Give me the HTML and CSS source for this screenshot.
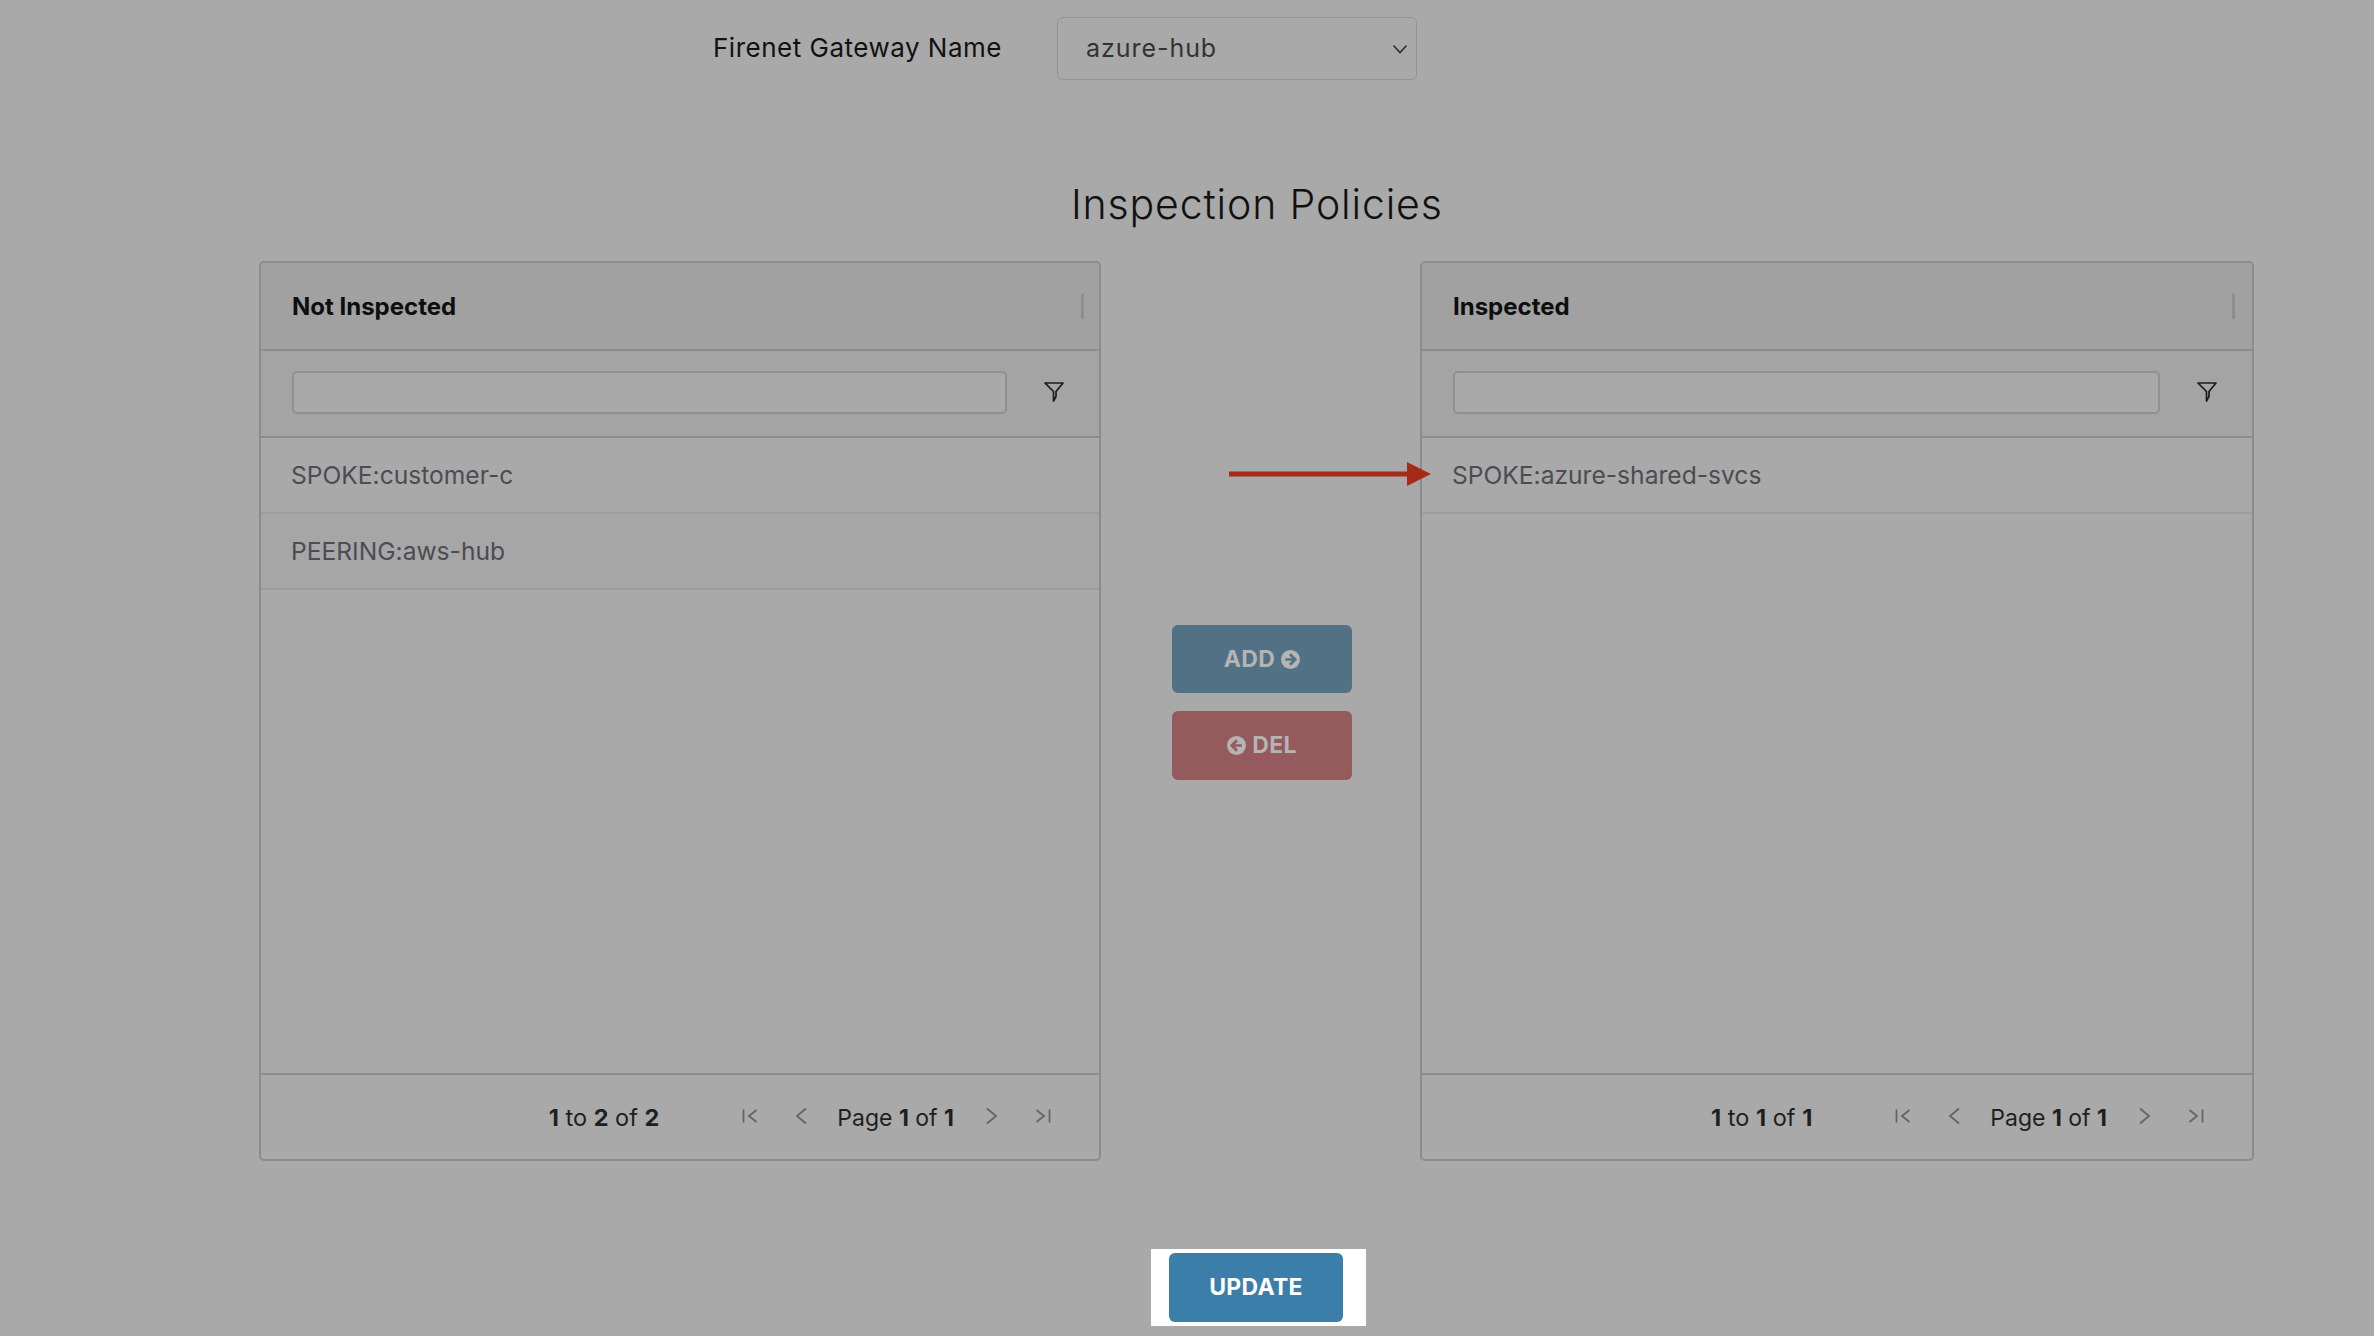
FILE: index.html
```html
<!DOCTYPE html>
<html lang="en">
<head>
<meta charset="utf-8">
<title>Inspection Policies</title>
<link rel="stylesheet" href="styles.css">
</head>
<body>
<main class="page">
  <div class="gateway">
    <label class="gateway-label">Firenet Gateway Name</label>
    <div class="select">
      <span>azure-hub</span>
      <svg class="select-caret" viewBox="0 0 16 10" width="16" height="10"><path d="M1.5 1.5 8 8.5l6.5-7" fill="none" stroke="#2e2e2e" stroke-width="1.6"/></svg>
    </div>
  </div>
  <h1 class="title">Inspection Policies</h1>
  <div class="columns">
    <section class="grid grid-left">
      <header class="grid-head"><span>Not Inspected</span><i class="head-sep"></i></header>
      <div class="grid-filter">
        <div class="filter-input"></div>
        <svg class="funnel" viewBox="0 0 20 20" width="20" height="20"><path d="M1 1h18l-7 8.500v5l-2.500 4.500v-9.500z" fill="none" stroke="#1c1c1c" stroke-width="1.700" stroke-linejoin="round"/></svg>
      </div>
      <div class="grid-body">
        <div class="row">SPOKE:customer-c</div>
        <div class="row row-alt">PEERING:aws-hub</div>
      </div>
      <footer class="grid-foot">
        <span class="count"><b>1</b> to <b>2</b> of <b>2</b></span>
        <div class="pager">
          <svg class="pg" viewBox="0 0 16 16" width="16" height="16"><path d="M1.500 1.500v13M14.500 2 7 8l7.500 6" fill="none" stroke="#656565" stroke-width="1.800"/></svg>
          <svg class="pg pg-prev" viewBox="0 0 14 18" width="14" height="18"><path d="M12 1.500 3 9l9 7.500" fill="none" stroke="#656565" stroke-width="1.800"/></svg>
          <span class="page-text">Page <b>1</b> of <b>1</b></span>
          <svg class="pg pg-next" viewBox="0 0 14 18" width="14" height="18"><path d="M2 1.500 11 9l-9 7.500" fill="none" stroke="#656565" stroke-width="1.800"/></svg>
          <svg class="pg pg-last" viewBox="0 0 16 16" width="16" height="16"><path d="M1.500 2 9 8l-7.500 6M14.500 1.500v13" fill="none" stroke="#656565" stroke-width="1.800"/></svg>
        </div>
      </footer>
    </section>
    <div class="actions">
      <button class="btn btn-add">ADD <svg class="btn-icon" viewBox="0 0 20 20" width="19" height="19"><circle cx="10" cy="10" r="10" fill="#b4b4b4"/><path d="M9.500 4.500 15 10l-5.500 5.500M15 10H4.500" fill="none" stroke="#527185" stroke-width="2.800"/></svg></button>
      <button class="btn btn-del"><svg class="btn-icon" viewBox="0 0 20 20" width="19" height="19"><circle cx="10" cy="10" r="10" fill="#b4b4b4"/><path d="M10.500 4.500 5 10l5.500 5.500M5 10h10.500" fill="none" stroke="#945a5c" stroke-width="2.800"/></svg> DEL</button>
    </div>
    <section class="grid grid-right">
      <header class="grid-head"><span>Inspected</span><i class="head-sep"></i></header>
      <div class="grid-filter">
        <div class="filter-input"></div>
        <svg class="funnel" viewBox="0 0 20 20" width="20" height="20"><path d="M1 1h18l-7 8.500v5l-2.500 4.500v-9.500z" fill="none" stroke="#1c1c1c" stroke-width="1.700" stroke-linejoin="round"/></svg>
      </div>
      <div class="grid-body">
        <div class="row">SPOKE:azure-shared-svcs</div>
      </div>
      <footer class="grid-foot">
        <span class="count"><b>1</b> to <b>1</b> of <b>1</b></span>
        <div class="pager">
          <svg class="pg" viewBox="0 0 16 16" width="16" height="16"><path d="M1.500 1.500v13M14.500 2 7 8l7.500 6" fill="none" stroke="#656565" stroke-width="1.800"/></svg>
          <svg class="pg pg-prev" viewBox="0 0 14 18" width="14" height="18"><path d="M12 1.500 3 9l9 7.500" fill="none" stroke="#656565" stroke-width="1.800"/></svg>
          <span class="page-text">Page <b>1</b> of <b>1</b></span>
          <svg class="pg pg-next" viewBox="0 0 14 18" width="14" height="18"><path d="M2 1.500 11 9l-9 7.500" fill="none" stroke="#656565" stroke-width="1.800"/></svg>
          <svg class="pg pg-last" viewBox="0 0 16 16" width="16" height="16"><path d="M1.500 2 9 8l-7.500 6M14.500 1.500v13" fill="none" stroke="#656565" stroke-width="1.800"/></svg>
        </div>
      </footer>
    </section>
    <svg class="callout" viewBox="0 0 202 24" width="202" height="24"><path d="M0 9.500h178V0l24 12-24 12v-9.500H0z" fill="#a52b18"/></svg>
  </div>
  <div class="update-spot"><button class="btn-update">UPDATE</button></div>
</main>
</body>
</html>
```
FILE: styles.css
```css
* { box-sizing: border-box; }
html, body { margin: 0; height: 100%; }
body { background: #a9a9a9; overflow: hidden; }
.page { height: 1336px; display: flex; flex-direction: column; padding-top: 17px; }

.gateway { display: flex; align-items: center; height: 63px; padding-left: 713px; }
.gateway-label { width: 344px; padding-bottom: 2px; font: 400 26px/1 Inter, sans-serif; color: #111; letter-spacing: 0.5px; }
.select { width: 360px; height: 63px; border: 1px solid #939393; border-radius: 6px; display: flex; align-items: center; justify-content: space-between; padding: 0 8px 0 28px; font: 400 25px/1 Inter, sans-serif; letter-spacing: 0.95px; color: #333; }

.title { margin: 0; height: 181px; padding: 100px 0 0 1071px; font: 300 41px/48px Inter, sans-serif; letter-spacing: 0.85px; color: #111; white-space: nowrap; }

.columns { position: relative; display: flex; align-items: stretch; height: 900px; padding-left: 259px; }
.grid { display: flex; flex-direction: column; border: 2px solid #8a8c90; border-radius: 5px; font-family: Inter, sans-serif; }
.grid-left { width: 842px; }
.grid-right { width: 834px; }
.grid-head { flex: none; height: 88px; padding: 1px 17px 0 31px; display: flex; align-items: center; justify-content: space-between; background: #a1a1a1; border-bottom: 2px solid #8a8c90; font-size: 24px; font-weight: 700; color: #0e0e0e; border-radius: 3px 3px 0 0; }
.head-sep { width: 3px; height: 25px; background: #8e8e8e; }
.grid-left .head-sep { margin-right: -2px; }
.grid-filter { flex: none; height: 87px; display: flex; align-items: center; gap: 37px; padding: 0 35px 3px 31px; background: #a4a4a4; border-bottom: 2px solid #8a8c90; }
.filter-input { flex: 1; height: 43px; border: 2px solid #8e9094; border-radius: 5px; background: #a9a9a9; }
.funnel { flex: none; }
.grid-body { flex: 1; }
.row { height: 76px; display: flex; align-items: center; padding-left: 30px; font-size: 24.6px; color: #4a4d52; border-bottom: 2px solid #9d9ea3; }
.row-alt { background: #a6a6a6; }
.grid-foot { flex: none; height: 86px; padding: 1px 48px 0 0; display: flex; align-items: center; justify-content: flex-end; border-top: 2px solid #8a8c90; font-size: 23.5px; color: #1f1f1f; }
.grid-foot b { font-weight: 700; }
.count { margin-right: 83px; }
.pager { display: flex; align-items: center; }
.pg { flex: none; position: relative; top: -2px; }
.pg-prev { margin-left: 36px; }
.page-text { margin: 0 31px 0 29px; font-size: 23px; }
.pg-last { margin-left: 36px; }

.actions { width: 319px; padding: 364px 0 0 71px; display: flex; flex-direction: column; gap: 18px; flex: none; }
.btn { width: 180px; height: 68px; border: 0; border-radius: 6px; display: flex; align-items: center; justify-content: center; gap: 6px; font: 700 23px/1 Inter, sans-serif; letter-spacing: 0.3px; color: #b4b4b4; }
.btn-add { background: #527185; }
.btn-del { background: #945a5c; height: 69px; }
.callout { position: absolute; left: 1229px; top: 201px; }

.update-spot { align-self: flex-start; margin: 88px 0 0 1151px; width: 215px; height: 77px; background: #fff; padding: 4px 23px 4px 18px; }
.btn-update { width: 174px; height: 69px; border: 0; border-radius: 6px; background: #3a7ea9; color: #fff; font: 700 23px/1 Inter, sans-serif; letter-spacing: 0.3px; }
```
